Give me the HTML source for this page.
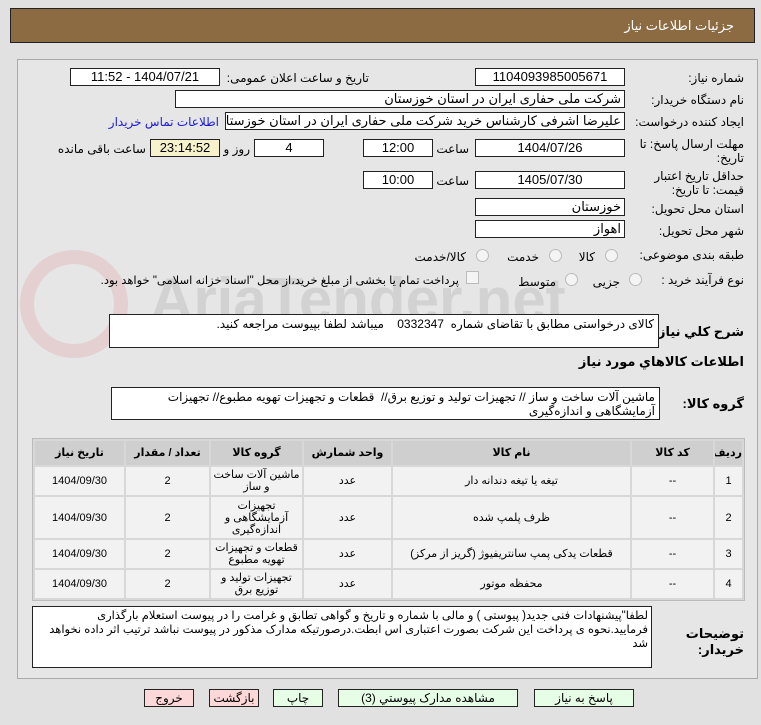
<!DOCTYPE html>
<html><head><meta charset="utf-8">
<style>
body{margin:0;width:761px;height:725px;background:#e1e1e1;font-family:"Liberation Sans","DejaVu Sans",sans-serif;font-size:12px;color:#000;position:relative;overflow:hidden}
.a{position:absolute}
.box{position:absolute;background:#fff;border:1px solid #222;box-sizing:border-box;height:18px;line-height:16px;text-align:center;font-size:13px;direction:rtl;white-space:nowrap;overflow:hidden}
.lbl{position:absolute;direction:rtl;text-align:right;white-space:nowrap;line-height:14px}
.b{font-weight:bold}
.ta{position:absolute;background:#fff;border:1px solid #222;box-sizing:border-box;direction:rtl;text-align:right;padding:2px 4px;line-height:14px;overflow:hidden}
table{position:absolute;left:32px;top:438px;width:713px;border-collapse:separate;border-spacing:2px;background:#d8d8d8;direction:rtl;border:1px solid #bbb;table-layout:fixed}
td,th{text-align:center;font-size:11px;line-height:12px;padding:0;overflow:hidden}
th{background:#cfcfcf;height:24px;white-space:nowrap}
td{background:#f2f2f2}
.btn{position:absolute;top:689px;height:18px;border:1px solid #222;box-sizing:border-box;text-align:center;line-height:16px;font-size:12px;direction:rtl;white-space:nowrap}
.g{background:#e6fde6}.p{background:#fdd8d8}
.rad{position:absolute;width:11px;height:11px;border-radius:50%;border:1px solid #bbb;background:#f4f4f4}
</style></head><body>
<div class="a" style="left:10px;top:8px;width:745px;height:35px;background:#8c6a42;border:1px solid #222;box-sizing:border-box"></div>
<div class="lbl" style="right:27px;top:19px;color:#fff;font-size:13px">جزئیات اطلاعات نیاز</div>
<div class="a" style="left:17px;top:59px;width:741px;height:620px;border:1px solid #aaa;box-sizing:border-box;background:#e6e6e6"></div>
<div class="a" style="left:150px;top:265px;font-size:60px;font-weight:bold;color:rgba(140,140,140,0.22);white-space:nowrap">AriaTender.net</div>
<div class="a" style="left:20px;top:250px;width:80px;height:80px;border:14px solid rgba(220,120,120,0.2);border-radius:50%"></div>

<div class="lbl" style="right:17px;top:71px">شماره نیاز:</div>
<div class="box" style="left:475px;top:68px;width:150px">1104093985005671</div>
<div class="lbl" style="right:392px;top:71px">تاریخ و ساعت اعلان عمومی:</div>
<div class="box" style="left:70px;top:68px;width:150px">1404/07/21 - 11:52</div>

<div class="lbl" style="right:17px;top:93px">نام دستگاه خریدار:</div>
<div class="box" style="left:175px;top:90px;width:450px;text-align:right;padding-right:3px">شرکت ملی حفاری ایران در استان خوزستان</div>

<div class="lbl" style="right:17px;top:115px">ایجاد کننده درخواست:</div>
<div class="box" style="left:225px;top:112px;width:400px;text-align:right;padding-right:3px">علیرضا اشرفی کارشناس خرید شرکت ملی حفاری ایران در استان خوزستان</div>
<div class="lbl" style="right:542px;top:115px;color:#1a1adc">اطلاعات تماس خریدار</div>

<div class="lbl" style="right:17px;top:137px">مهلت ارسال پاسخ: تا</div>
<div class="lbl" style="right:17px;top:151px">تاریخ:</div>
<div class="box" style="left:475px;top:139px;width:150px">1404/07/26</div>
<div class="lbl" style="right:292px;top:142px">ساعت</div>
<div class="box" style="left:363px;top:139px;width:70px">12:00</div>
<div class="box" style="left:254px;top:139px;width:70px">4</div>
<div class="lbl" style="right:511px;top:142px">روز و</div>
<div class="box" style="left:150px;top:139px;width:70px;background:#f6f3cc">23:14:52</div>
<div class="lbl" style="right:615px;top:142px">ساعت باقی مانده</div>

<div class="lbl" style="right:17px;top:169px">حداقل تاریخ اعتبار</div>
<div class="lbl" style="right:17px;top:183px">قیمت: تا تاریخ:</div>
<div class="box" style="left:475px;top:171px;width:150px">1405/07/30</div>
<div class="lbl" style="right:292px;top:174px">ساعت</div>
<div class="box" style="left:363px;top:171px;width:70px">10:00</div>

<div class="lbl" style="right:17px;top:202px">استان محل تحویل:</div>
<div class="box" style="left:475px;top:198px;width:150px;text-align:right;padding-right:3px">خوزستان</div>
<div class="lbl" style="right:17px;top:224px">شهر محل تحویل:</div>
<div class="box" style="left:475px;top:220px;width:150px;text-align:right;padding-right:3px">اهواز</div>

<div class="lbl" style="right:17px;top:248px">طبقه بندی موضوعی:</div>
<div class="rad" style="left:605px;top:249px"></div><div class="lbl" style="right:166px;top:250px">کالا</div>
<div class="rad" style="left:549px;top:249px"></div><div class="lbl" style="right:222px;top:250px">خدمت</div>
<div class="rad" style="left:476px;top:249px"></div><div class="lbl" style="right:295px;top:250px">کالا/خدمت</div>

<div class="lbl" style="right:17px;top:273px">نوع فرآیند خرید :</div>
<div class="rad" style="left:629px;top:273px"></div><div class="lbl" style="right:141px;top:275px">جزیی</div>
<div class="rad" style="left:565px;top:273px"></div><div class="lbl" style="right:205px;top:275px">متوسط</div>
<div class="a" style="left:466px;top:271px;width:11px;height:11px;border:1px solid #bbb;background:#f4f4f4"></div>
<div class="lbl" style="right:302px;top:274px;font-size:11.5px">پرداخت تمام یا بخشی از مبلغ خرید،از محل "اسناد خزانه اسلامی" خواهد بود.</div>

<div class="lbl b" style="right:17px;top:325px;font-size:13px">شرح کلي نیاز:</div>
<div class="ta" style="left:109px;top:314px;width:550px;height:34px">کالای درخواستی مطابق با تقاضای شماره &nbsp;0332347 &nbsp;&nbsp; میباشد لطفا بپیوست مراجعه کنید.</div>
<div class="lbl b" style="right:17px;top:355px;font-size:13px">اطلاعات کالاهاي مورد نیاز</div>
<div class="lbl b" style="right:17px;top:397px;font-size:13px">گروه کالا:</div>
<div class="ta" style="left:111px;top:387px;width:549px;height:33px">ماشین آلات ساخت و ساز // تجهیزات تولید و توزیع برق// &nbsp;قطعات و تجهیزات تهویه مطبوع// تجهیزات آزمایشگاهی و اندازه‌گیری</div>

<table>
<colgroup><col style="width:27px"><col style="width:81px"><col style="width:237px"><col style="width:87px"><col style="width:91px"><col style="width:83px"><col></colgroup>
<tr><th style="height:24px">ردیف</th><th>کد کالا</th><th>نام کالا</th><th>واحد شمارش</th><th>گروه کالا</th><th>تعداد / مقدار</th><th>تاریخ نیاز</th></tr>
<tr><td style="height:28px">1</td><td>--</td><td>تیغه یا تیغه دندانه دار</td><td>عدد</td><td>ماشین آلات ساخت و ساز</td><td>2</td><td>1404/09/30</td></tr>
<tr><td style="height:41px">2</td><td>--</td><td>ظرف پلمپ شده</td><td>عدد</td><td>تجهیزات آزمایشگاهی و اندازه‌گیری</td><td>2</td><td>1404/09/30</td></tr>
<tr><td style="height:28px">3</td><td>--</td><td>قطعات یدکی پمپ سانتریفیوژ (گریز از مرکز)</td><td>عدد</td><td>قطعات و تجهیزات تهویه مطبوع</td><td>2</td><td>1404/09/30</td></tr>
<tr><td style="height:28px">4</td><td>--</td><td>محفظه موتور</td><td>عدد</td><td>تجهیزات تولید و توزیع برق</td><td>2</td><td>1404/09/30</td></tr>
</table>

<div class="lbl b" style="right:17px;top:627px;font-size:13px">توضیحات</div>
<div class="lbl b" style="right:17px;top:643px;font-size:13px">خریدار:</div>
<div class="ta" style="left:32px;top:606px;width:620px;height:62px;font-size:11.5px;padding:2px 3px">لطفا"پیشنهادات فنی جدید( پیوستی ) و مالی با شماره و تاریخ و گواهی تطابق و غرامت را در پیوست استعلام بارگذاری فرمایید.نحوه ی پرداخت این شرکت بصورت اعتباری اس ابطت.درصورتیکه مدارک مذکور در پیوست نباشد ترتیب اثر داده نخواهد شد</div>

<div class="btn g" style="left:534px;width:100px">پاسخ به نیاز</div>
<div class="btn g" style="left:338px;width:180px">مشاهده مدارک پیوستي (3)</div>
<div class="btn g" style="left:273px;width:50px">چاپ</div>
<div class="btn p" style="left:209px;width:50px">بازگشت</div>
<div class="btn p" style="left:144px;width:50px">خروج</div>
</body></html>
